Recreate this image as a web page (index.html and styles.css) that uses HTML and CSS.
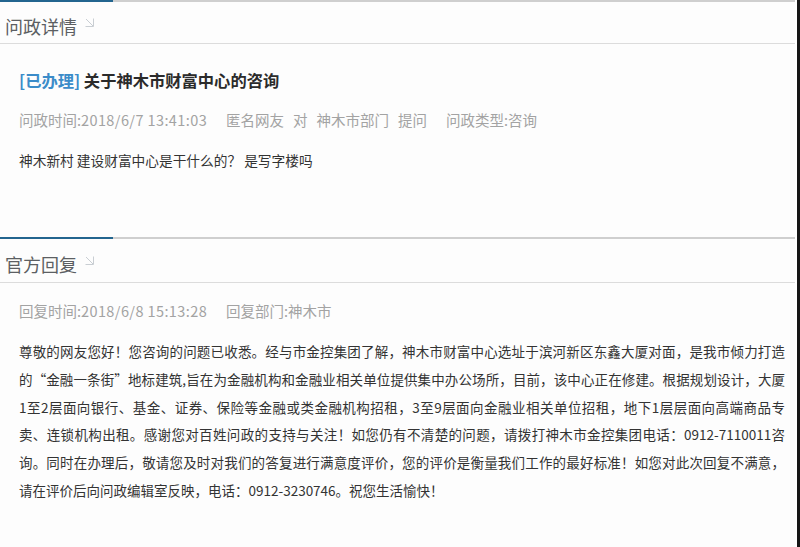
FILE: index.html
```html
<!DOCTYPE html>
<html lang="zh-CN">
<head>
<meta charset="utf-8">
<title>问政详情</title>
<link rel="stylesheet" href="styles.css">
</head>
<body>
<div class="page">
  <section class="sec">
    <div class="topline"><div class="accent"></div><div class="rest"></div></div>
    <div class="head head-1">
      <span class="head-title">问政详情</span>
      <svg class="corner" width="9" height="9" viewBox="0 0 9 9"><path d="M8.5 0.5V8.5H0.5M1 1L8 8" fill="none" stroke="#c9ced3" stroke-width="1"/></svg>
    </div>
    <div class="detail">
      <div class="q-title"><span class="status">[已办理]</span> 关于神木市财富中心的咨询</div>
      <div class="meta">
        <span>问政时间:<span class="num">2018/6/7 13:41:03</span></span>
        <span class="wide">匿名网友</span>
        <span class="narrow">对</span>
        <span class="narrow">神木市部门</span>
        <span class="narrow">提问</span>
        <span class="wide">问政类型:咨询</span>
      </div>
      <div class="q-body">神木新村 建设财富中心是干什么的？ 是写字楼吗</div>
    </div>
  </section>
  <section class="sec">
    <div class="topline"><div class="accent"></div><div class="rest"></div></div>
    <div class="head head-2">
      <span class="head-title">官方回复</span>
      <svg class="corner" width="9" height="9" viewBox="0 0 9 9"><path d="M8.5 0.5V8.5H0.5M1 1L8 8" fill="none" stroke="#c9ced3" stroke-width="1"/></svg>
    </div>
    <div class="reply">
      <div class="meta">
        <span>回复时间:<span class="num">2018/6/8 15:13:28</span></span>
        <span class="wide">回复部门:神木市</span>
      </div>
      <div class="answer">
        <span class="ln">尊敬的网友您好！您咨询的问题已收悉。经与市金控集团了解，神木市财富中心选址于滨河新区东鑫大厦对面，是我市倾力打造</span>
        <span class="ln">的<span class="fw">“</span>金融一条街<span class="fw">”</span>地标建筑,旨在为金融机构和金融业相关单位提供集中办公场所，目前，该中心正在修建。根据规划设计，大厦</span>
        <span class="ln">1至2层面向银行、基金、证券、保险等金融或类金融机构招租，3至9层面向金融业相关单位招租，地下1层层面向高端商品专</span>
        <span class="ln">卖、连锁机构出租。感谢您对百姓问政的支持与关注！如您仍有不清楚的问题，请拨打神木市金控集团电话：0912-7110011咨</span>
        <span class="ln">询。同时在办理后，敬请您及时对我们的答复进行满意度评价，您的评价是衡量我们工作的最好标准！如您对此次回复不满意，</span>
        <span class="ln last">请在评价后向问政编辑室反映，电话：0912-3230746。祝您生活愉快！</span>
      </div>
    </div>
  </section>
</div>
<div class="edge"></div>
</body>
</html>
```
FILE: styles.css
```css
html, body {
  margin: 0;
  padding: 0;
  background: #fff;
}
body {
  display: flex;
  min-height: 547px;
  font-family: "Noto Sans CJK SC", "Liberation Sans", sans-serif;
  color: #333;
}
.page {
  width: 795px;
  background: #fdfdfd;
}
.edge {
  width: 3px;
  margin-left: 2px;
  background: #161616;
}
.topline {
  display: flex;
  height: 2px;
}
.accent {
  width: 113px;
  background: #23658f;
}
.rest {
  flex: 1;
  background: #cfcfcf;
}
.head {
  display: flex;
  align-items: center;
  gap: 8px;
  padding-left: 5px;
  border-bottom: 1px solid #dcdcdc;
  box-sizing: border-box;
}
.head-1 {
  padding-top: 6px;
  height: 42px;
}
.head-2 {
  padding-top: 6px;
  height: 44px;
}
.head-title {
  font-size: 18px;
  color: #5c5f63;
  line-height: 24px;
}
.corner {
  margin-top: -6px;
}
.detail {
  padding: 24px 10px 65px 19px;
}
.q-title {
  font-size: 16.3px;
  font-weight: bold;
  line-height: 24px;
  color: #2b2b2b;
}
.status {
  color: #3b8cc9;
}
.meta {
  display: flex;
  font-size: 14.5px;
  line-height: 24px;
  color: #a3a3a3;
  white-space: pre;
}
.num {
  letter-spacing: 0.4px;
}
.detail .meta {
  margin-top: 16px;
}
.wide {
  margin-left: 19px;
}
.narrow {
  margin-left: 9px;
}
.q-body {
  margin-top: 16px;
  font-size: 13.7px;
  line-height: 24px;
  color: #333;
  white-space: pre;
}
.reply {
  padding: 16px 10px 0 19px;
}
.answer {
  margin-top: 15px;
  font-size: 13.5px;
  line-height: 27.8px;
  color: #333;
}
.ln {
  display: block;
  text-align: justify;
  text-align-last: justify;
  white-space: nowrap;
}
.ln.last {
  text-align-last: left;
}
.fw {
  font-feature-settings: "fwid";
}
```
